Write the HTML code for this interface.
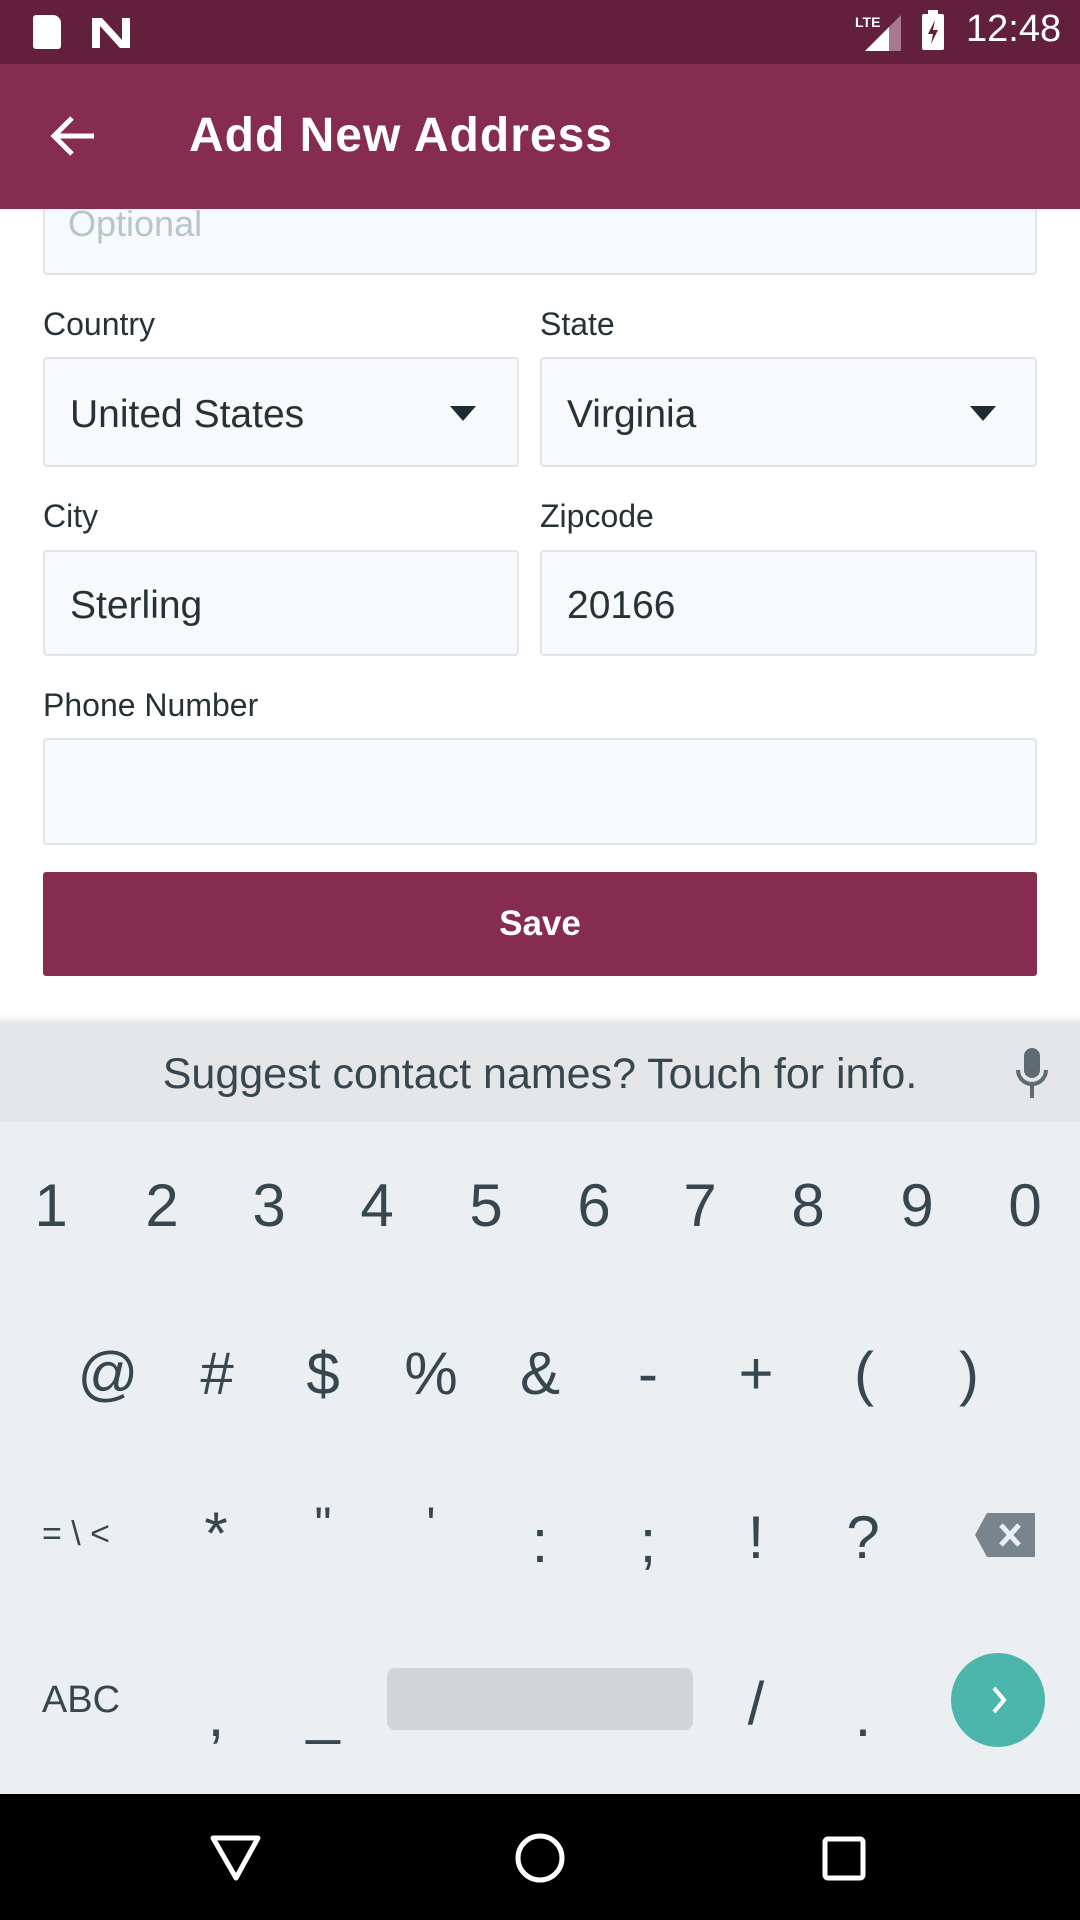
<!DOCTYPE html>
<html><head><meta charset="utf-8"><style>
*{margin:0;padding:0;box-sizing:border-box}
body{width:1080px;height:1920px;position:relative;overflow:hidden;background:#fff;font-family:"Liberation Sans",sans-serif}
.a{position:absolute}
.lbl{position:absolute;font-size:32px;color:#263238}
.box{position:absolute;background:#f7f9fa;border:2px solid #dfe5ea;border-radius:4px}
.val{position:absolute;left:25px;font-size:39px;color:#263238}
.k{position:absolute;width:110px;margin-left:-55px;text-align:center;color:#37474f;font-size:60px;line-height:80px}
.tri{position:absolute;width:0;height:0;border-left:13px solid transparent;border-right:13px solid transparent;border-top:15px solid #1e2b33}
</style></head><body>
<div class="a" style="left:0;top:0;width:1080px;height:64px;background:#63203d"></div>
<div class="a" style="left:33px;top:15px;width:28px;height:34px;background:#fff;border-radius:3px 8px 3px 3px"></div>
<svg class="a" style="left:90px;top:16px" width="42" height="34"><path d="M2 2H12L32 24V2H40V32H30L10 10V32H2Z" fill="#fff"/></svg>
<svg class="a" style="left:855px;top:13px" width="48" height="40"><text x="0" y="14" font-size="14" fill="#fff" font-family="Liberation Sans" font-weight="bold">LTE</text><polygon points="10,38 46,38 46,2" fill="#a87890"/><polygon points="10,38 34,38 34,14" fill="#fff"/></svg>
<svg class="a" style="left:920px;top:10px" width="26" height="42"><rect x="2" y="4" width="22" height="36" rx="2" fill="#fff"/><rect x="8" y="0" width="10" height="5" fill="#fff"/><path d="M15 10L8 24H13L11 34L18 20H13Z" fill="#63203d"/></svg>
<div class="a" style="left:966px;top:8px;font-size:38px;color:#fff">12:48</div>
<div class="a" style="left:0;top:64px;width:1080px;height:145px;background:#852c4f"></div>
<svg class="a" style="left:48px;top:114px" width="50" height="44"><path d="M46 22H6M24 4L6 22L24 40" stroke="#fff" stroke-width="5" fill="none"/></svg>
<div class="a" style="left:189px;top:108px;font-size:48px;font-weight:bold;color:#fff;letter-spacing:1px">Add New Address</div>

<div class="box" style="left:43px;top:190px;width:994px;height:85px;border-top:none"></div>
<div class="a" style="left:68px;top:203px;font-size:36px;color:#b5c6cc">Optional</div>
<div class="a" style="left:0;top:190px;width:1080px;height:19px;background:#852c4f"></div>

<div class="lbl" style="left:43px;top:306px">Country</div>
<div class="lbl" style="left:540px;top:306px">State</div>
<div class="box" style="left:43px;top:357px;width:476px;height:110px"><div class="val" style="top:34px">United States</div><div class="tri" style="left:405px;top:47px"></div></div>
<div class="box" style="left:540px;top:357px;width:497px;height:110px"><div class="val" style="top:34px">Virginia</div><div class="tri" style="left:428px;top:47px"></div></div>
<div class="lbl" style="left:43px;top:498px">City</div>
<div class="lbl" style="left:540px;top:498px">Zipcode</div>
<div class="box" style="left:43px;top:550px;width:476px;height:106px"><div class="val" style="top:32px">Sterling</div></div>
<div class="box" style="left:540px;top:550px;width:497px;height:106px"><div class="val" style="top:32px">20166</div></div>
<div class="lbl" style="left:43px;top:687px">Phone Number</div>
<div class="box" style="left:43px;top:738px;width:994px;height:107px"></div>
<div class="a" style="left:43px;top:872px;width:994px;height:104px;background:#852c4f;border-radius:3px;color:#fff;font-size:35px;font-weight:bold;text-align:center;line-height:104px">Save</div>

<div class="a" style="left:0;top:1014px;width:1080px;height:10px;background:linear-gradient(#fff,#e3e5e7)"></div>
<div class="a" style="left:0;top:1022px;width:1080px;height:100px;background:#e4e6e8"></div>
<div class="a" style="left:0;top:1050px;width:1080px;text-align:center;font-size:43px;color:#37474f">Suggest contact names? Touch for info.</div>
<svg class="a" style="left:1012px;top:1046px" width="40" height="56"><rect x="12" y="2" width="16" height="30" rx="8" fill="#5f6b72"/><path d="M6 24a14 14 0 0 0 28 0M20 38v14" stroke="#5f6b72" stroke-width="4" fill="none"/></svg>
<div class="a" style="left:0;top:1122px;width:1080px;height:672px;background:#eceff1"></div>

<div class="k" style="left:51px;top:1166px">1</div><div class="k" style="left:162px;top:1166px">2</div><div class="k" style="left:269px;top:1166px">3</div><div class="k" style="left:377px;top:1166px">4</div><div class="k" style="left:486px;top:1166px">5</div><div class="k" style="left:594px;top:1166px">6</div><div class="k" style="left:700px;top:1166px">7</div><div class="k" style="left:808px;top:1166px">8</div><div class="k" style="left:917px;top:1166px">9</div><div class="k" style="left:1025px;top:1166px">0</div>

<div class="k" style="left:108px;top:1334px">@</div><div class="k" style="left:217px;top:1334px">#</div><div class="k" style="left:323px;top:1334px">$</div><div class="k" style="left:431px;top:1334px">%</div><div class="k" style="left:540px;top:1334px">&amp;</div><div class="k" style="left:648px;top:1334px">-</div><div class="k" style="left:756px;top:1334px">+</div><div class="k" style="left:864px;top:1334px">(</div><div class="k" style="left:969px;top:1334px">)</div>

<div class="k" style="left:76px;top:1494px;font-size:34px">= \ &lt;</div><div class="k" style="left:216px;top:1494px">*</div><div class="k" style="left:323px;top:1486px;font-size:48px">"</div><div class="k" style="left:431px;top:1486px;font-size:48px">'</div><div class="k" style="left:540px;top:1502px">:</div><div class="k" style="left:648px;top:1502px">;</div><div class="k" style="left:756px;top:1498px">!</div><div class="k" style="left:863px;top:1498px">?</div>
<svg class="a" style="left:973px;top:1511px" width="64" height="48"><path d="M14 2H62V46H14L2 24Z" fill="#78858c"/><path d="M28 14L46 34M46 14L28 34" stroke="#eceff1" stroke-width="5"/></svg>

<div class="k" style="left:81px;top:1660px;font-size:38px;width:140px;margin-left:-70px">ABC</div><div class="k" style="left:216px;top:1676px">,</div><div class="k" style="left:323px;top:1672px">_</div><div class="k" style="left:756px;top:1664px">/</div><div class="k" style="left:863px;top:1676px">.</div>
<div class="a" style="left:387px;top:1668px;width:306px;height:62px;background:#d2d5d8;border-radius:8px"></div>
<div class="a" style="left:951px;top:1653px;width:94px;height:94px;border-radius:50%;background:#4db6ac"></div>
<svg class="a" style="left:984px;top:1684px" width="30" height="32"><path d="M10 4L20 16L10 28" stroke="#fff" stroke-width="4" fill="none"/></svg>

<div class="a" style="left:0;top:1794px;width:1080px;height:126px;background:#000"></div>
<svg class="a" style="left:0;top:1794px" width="1080" height="126"><path d="M213 44H258L236 84Z" stroke="#fff" stroke-width="5" fill="none" stroke-linejoin="round"/><circle cx="540" cy="64" r="22" stroke="#fff" stroke-width="5" fill="none"/><rect x="825" y="45" width="38" height="39" rx="3" stroke="#fff" stroke-width="5" fill="none"/></svg>
</body></html>
